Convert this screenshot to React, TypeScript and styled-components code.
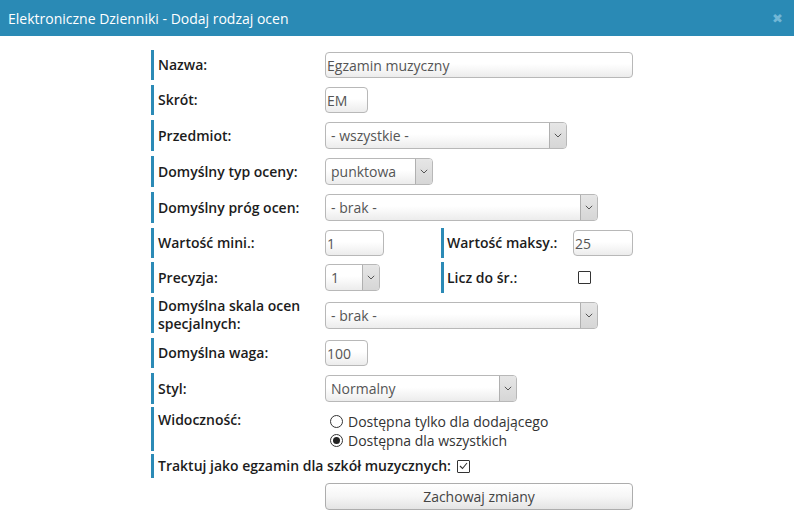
import React from "react";
import styled, { createGlobalStyle } from "styled-components";

const Global = createGlobalStyle`
  html, body { margin: 0; padding: 0; background: #fff; }
  body { font-family: "Open Sans", "Noto Sans", sans-serif; }
  * { box-sizing: border-box; }
`;

const Header = styled.div`
  height: 36px;
  background: #2a8ab5;
  display: flex;
  align-items: center;
  justify-content: space-between;
  padding: 0 11px 0 8px;
  color: #fff;
  font-size: 14px;
`;

const Close = styled.span`
  color: #72b7d6;
  font-size: 13px;
  font-weight: 700;
  font-family: "DejaVu Sans", sans-serif;
`;

const Form = styled.div`
  width: 492px;
  margin: 14px auto 0;
`;

const Row = styled.div<{ $gap?: number }>`
  display: flex;
  align-items: stretch;
  margin-bottom: ${(p) => p.$gap ?? 5}px;
`;

const LabelCell = styled.div<{ $w?: number; $top?: boolean; $narrow?: boolean }>`
  width: ${(p) => (p.$w ? `${p.$w}px` : "auto")};
  flex-shrink: 0;
  border-left: 3px solid #2b8ab6;
  padding-left: ${(p) => (p.$narrow ? 3 : 4)}px;
  display: flex;
  align-items: ${(p) => (p.$top ? "flex-start" : "center")};
  padding-top: ${(p) => (p.$top ? 4 : 0)}px;
  font-size: 14px;
  font-weight: 600;
  color: #1c1c1c;
  line-height: 18px;
`;

const FieldCell = styled.div<{ $w?: number }>`
  width: ${(p) => (p.$w ? `${p.$w}px` : "auto")};
  flex-shrink: 0;
  display: flex;
  align-items: center;
  padding: 2px 0;
`;

const TextInput = styled.div<{ $w: number }>`
  width: ${(p) => p.$w}px;
  height: 26px;
  border: 1px solid #b8b8b8;
  border-radius: 4px;
  background: linear-gradient(#ffffff 0%, #ffffff 45%, #ececec 100%);
  color: #555;
  font-size: 14px;
  display: flex;
  align-items: center;
  padding-left: 1px;
`;

const SelectBox = styled.div<{ $w: number }>`
  width: ${(p) => p.$w}px;
  height: 27px;
  border: 1px solid #b8b8b8;
  border-radius: 4px;
  background: linear-gradient(#ffffff 0%, #ffffff 45%, #ececec 100%);
  color: #555;
  font-size: 14px;
  display: flex;
  align-items: stretch;
  overflow: hidden;
`;

const SelectText = styled.span`
  flex: 1;
  display: flex;
  align-items: center;
  padding-left: 5px;
`;

const Arrow = styled.span`
  width: 17px;
  border-left: 1px solid #b0b0b0;
  background: linear-gradient(#e6e6e6, #d6d6d6);
  display: flex;
  align-items: center;
  justify-content: center;
`;

const Chevron = () => (
  <svg width="8" height="5" viewBox="0 0 8 5">
    <path d="M0.8 0.8 L4 4 L7.2 0.8" fill="none" stroke="#555" strokeWidth="1" />
  </svg>
);

const Select = ({ w, value }: { w: number; value: string }) => (
  <SelectBox $w={w}>
    <SelectText>{value}</SelectText>
    <Arrow>
      <Chevron />
    </Arrow>
  </SelectBox>
);

const CheckBox = styled.span<{ $offset?: number }>`
  width: 13px;
  height: 13px;
  margin-left: ${(p) => p.$offset ?? 0}px;
  border: 1px solid #333;
  display: inline-flex;
  align-items: center;
  justify-content: center;
  background: #fff;
  border-radius: 1px;
`;

const RadioList = styled.div`
  display: flex;
  flex-direction: column;
  padding: 5px 0 1px 5px;
`;

const RadioLine = styled.label`
  display: flex;
  align-items: center;
  height: 19px;
  font-size: 14px;
  color: #333;
  gap: 5px;
`;

const RadioDot = styled.span<{ $on?: boolean }>`
  width: 13px;
  height: 13px;
  border-radius: 50%;
  border: 1px solid #333;
  display: inline-flex;
  align-items: center;
  justify-content: center;
  &::after {
    content: "";
    width: 7px;
    height: 7px;
    border-radius: 50%;
    background: ${(p) => (p.$on ? "#222" : "transparent")};
  }
`;

const InlineLabel = styled(LabelCell)`
  gap: 6px;
  padding-top: 3px;
  padding-bottom: 3px;
`;

const TwoLine = styled.span`
  line-height: 18px;
`;

const ButtonRow = styled.div`
  padding-left: 174px;
  margin-top: 5px;
`;

const Button = styled.button`
  width: 308px;
  height: 27px;
  border: 1px solid #adadad;
  border-radius: 4px;
  background: linear-gradient(#ffffff 0%, #f6f6f6 50%, #e4e4e4 100%);
  color: #444;
  font-family: inherit;
  font-size: 14px;
  padding: 0;
`;

const LW = 174;

export default function App() {
  return (
    <>
      <Global />
      <Header>
        <span>Elektroniczne Dzienniki - Dodaj rodzaj ocen</span>
        <Close>✖</Close>
      </Header>
      <Form>
        <Row>
          <LabelCell $w={LW}>Nazwa:</LabelCell>
          <FieldCell>
            <TextInput $w={308}>Egzamin muzyczny</TextInput>
          </FieldCell>
        </Row>
        <Row>
          <LabelCell $w={LW}>Skrót:</LabelCell>
          <FieldCell>
            <TextInput $w={43}>EM</TextInput>
          </FieldCell>
        </Row>
        <Row>
          <LabelCell $w={LW}>Przedmiot:</LabelCell>
          <FieldCell>
            <Select w={242} value="- wszystkie -" />
          </FieldCell>
        </Row>
        <Row>
          <LabelCell $w={LW}>Domyślny typ oceny:</LabelCell>
          <FieldCell>
            <Select w={108} value="punktowa" />
          </FieldCell>
        </Row>
        <Row>
          <LabelCell $w={LW}>Domyślny próg ocen:</LabelCell>
          <FieldCell>
            <Select w={273} value="- brak -" />
          </FieldCell>
        </Row>
        <Row $gap={4}>
          <LabelCell $w={LW}>Wartość mini.:</LabelCell>
          <FieldCell $w={116}>
            <TextInput $w={59}>1</TextInput>
          </FieldCell>
          <LabelCell $w={132} $narrow>
            Wartość maksy.:
          </LabelCell>
          <FieldCell>
            <TextInput $w={60}>25</TextInput>
          </FieldCell>
        </Row>
        <Row $gap={4}>
          <LabelCell $w={LW}>Precyzja:</LabelCell>
          <FieldCell $w={116}>
            <Select w={55} value="1" />
          </FieldCell>
          <LabelCell $w={132} $narrow>
            Licz do śr.:
          </LabelCell>
          <FieldCell>
            <CheckBox $offset={5} />
          </FieldCell>
        </Row>
        <Row $gap={5}>
          <LabelCell $w={LW}>
            <TwoLine>
              Domyślna skala ocen
              <br />
              specjalnych:
            </TwoLine>
          </LabelCell>
          <FieldCell>
            <Select w={273} value="- brak -" />
          </FieldCell>
        </Row>
        <Row>
          <LabelCell $w={LW}>Domyślna waga:</LabelCell>
          <FieldCell>
            <TextInput $w={43}>100</TextInput>
          </FieldCell>
        </Row>
        <Row $gap={3}>
          <LabelCell $w={LW}>Styl:</LabelCell>
          <FieldCell>
            <Select w={192} value="Normalny" />
          </FieldCell>
        </Row>
        <Row $gap={3}>
          <LabelCell $w={LW} $top>
            Widoczność:
          </LabelCell>
          <RadioList>
            <RadioLine>
              <RadioDot />
              Dostępna tylko dla dodającego
            </RadioLine>
            <RadioLine>
              <RadioDot $on />
              Dostępna dla wszystkich
            </RadioLine>
          </RadioList>
        </Row>
        <Row $gap={0}>
          <InlineLabel>
            Traktuj jako egzamin dla szkół muzycznych:
            <CheckBox>
              <svg width="9" height="8" viewBox="0 0 9 8">
                <path d="M1 4 L3.5 6.5 L8 1" fill="none" stroke="#333" strokeWidth="1.1" />
              </svg>
            </CheckBox>
          </InlineLabel>
        </Row>
        <ButtonRow>
          <Button>Zachowaj zmiany</Button>
        </ButtonRow>
      </Form>
    </>
  );
}
